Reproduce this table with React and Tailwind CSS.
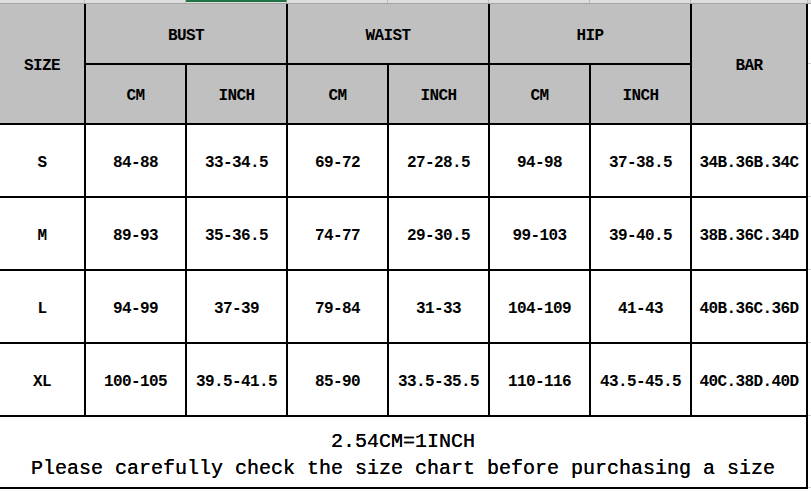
const groups = ["BUST", "WAIST", "HIP"];

const rows = [
  { size: "S", values: ["84-88", "33-34.5", "69-72", "27-28.5", "94-98", "37-38.5"], bar: "34B.36B.34C" },
  { size: "M", values: ["89-93", "35-36.5", "74-77", "29-30.5", "99-103", "39-40.5"], bar: "38B.36C.34D" },
  { size: "L", values: ["94-99", "37-39", "79-84", "31-33", "104-109", "41-43"], bar: "40B.36C.36D" },
  { size: "XL", values: ["100-105", "39.5-41.5", "85-90", "33.5-35.5", "110-116", "43.5-45.5"], bar: "40C.38D.40D" },
];

const cell = "flex items-center justify-center pt-[4px]";
const head = `${cell} bg-[#c0c0c0]`;
const body = `${cell} bg-white`;

export default function App() {
  return (
    <div
      className="flex h-[492px] w-[811px] flex-col overflow-hidden bg-white text-black"
      style={{ fontFamily: '"Liberation Mono", "DejaVu Sans Mono", monospace' }}
    >
      {/* spreadsheet strip above the chart */}
      <div className="flex h-[4px] border-b border-[#a6a6a6] bg-[#dedede]">
        <div className="w-[85px] border-r border-[#bdbdbd]" />
        <div className="w-[101px] border-r border-[#bdbdbd]" />
        <div className="w-[101px] border-t-2 border-r border-t-[#217346] border-r-[#bdbdbd]" />
        <div className="w-[101px] border-r border-[#bdbdbd]" />
        <div className="w-[101px] border-r border-[#bdbdbd]" />
        <div className="w-[101px] border-r border-[#bdbdbd]" />
        <div className="w-[101px] border-r border-[#bdbdbd]" />
        <div className="w-[117px] border-r border-[#bdbdbd]" />
      </div>

      <div className="flex">
        <div className="border-r-2 border-b-2 border-black">
          <div className="grid grid-cols-[84px_repeat(6,99px)_114px] grid-rows-[59px_58px_71px_71px_71px_71px_70px] gap-[2px] bg-black text-[16px] font-bold tracking-[-0.6px]">
            <div className={`${head} row-span-2`}>SIZE</div>
            {groups.map((g) => (
              <div key={g} className={`${head} col-span-2`}>
                {g}
              </div>
            ))}
            <div className={`${head} row-span-2`}>BAR</div>
            {groups.map((g) => (
              <div key={g} className="contents">
                <div className={head}>CM</div>
                <div className={head}>INCH</div>
              </div>
            ))}
            {rows.map((r) => (
              <div key={r.size} className="contents">
                <div className={body}>{r.size}</div>
                {r.values.map((v, i) => (
                  <div key={i} className={body}>
                    {v}
                  </div>
                ))}
                <div className={body}>{r.bar}</div>
              </div>
            ))}
            <div className="col-span-8 flex flex-col items-center justify-center bg-white pt-[6px] text-[20px] leading-[27px] font-normal tracking-normal [text-shadow:0_0_0.6px_#000]">
              <div>2.54CM=1INCH</div>
              <div>Please carefully check the size chart before purchasing a size</div>
            </div>
          </div>
        </div>

        {/* gridline ticks to the right of the chart */}
        <div className="grid w-[3px] grid-rows-[60px_60px_73px_73px_73px_73px_72px]">
          <div className="border-b border-[#d0d0d0]" />
          <div className="border-b border-[#d0d0d0]" />
          <div className="border-b border-[#d0d0d0]" />
          <div className="border-b border-[#d0d0d0]" />
          <div className="border-b border-[#d0d0d0]" />
          <div className="border-b border-[#d0d0d0]" />
          <div className="border-b border-[#d0d0d0]" />
        </div>
      </div>
    </div>
  );
}
